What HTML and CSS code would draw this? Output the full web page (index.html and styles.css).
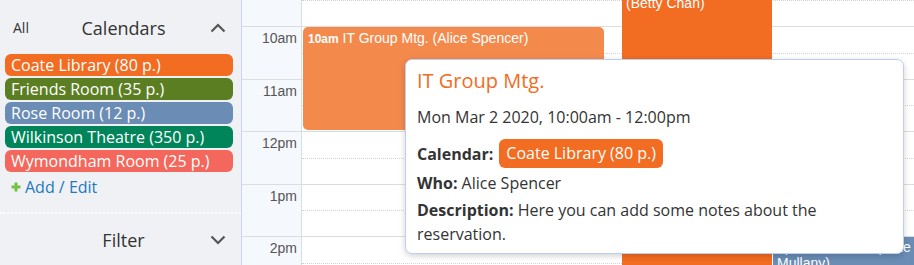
FILE: index.html
```html
<!DOCTYPE html>
<html lang="en">
<head>
  <meta charset="UTF-8" />
  <meta name="viewport" content="width=device-width, initial-scale=1" />
  <title>Room Reservations</title>
  <link rel="stylesheet" href="styles.css">
</head>
<body>

  <div class="app">
    <aside class="sidebar">
      <div class="side-head">
        <span class="all">All</span>
        <span class="side-title">Calendars</span>
        <svg class="chevron" width="16" height="10" viewBox="0 0 16 10"><polyline points="1.5,8.5 8,2 14.5,8.5" fill="none" stroke="#555" stroke-width="2.2" /></svg>
      </div>

      <div class="cal-list">
        <div class="cal c-coate">Coate Library (80 p.)</div>
        <div class="cal c-friends">Friends Room (35 p.)</div>
        <div class="cal c-rose">Rose Room (12 p.)</div>
        <div class="cal c-wilkinson">Wilkinson Theatre (350 p.)</div>
        <div class="cal c-wymondham">Wymondham Room (25 p.)</div>
      </div>

      <a class="add-edit" href="#">
        <svg class="plus" width="10" height="10" viewBox="0 0 10 10"><path d="M5 0.5v9M0.5 5h9" stroke="#76c043" stroke-width="3" /></svg>
        Add / Edit
      </a>

      <div class="side-head filter">
        <span class="all"></span>
        <span class="side-title">Filter</span>
        <svg class="chevron" width="16" height="10" viewBox="0 0 16 10"><polyline points="1.5,1.5 8,8 14.5,1.5" fill="none" stroke="#555" stroke-width="2.2" /></svg>
      </div>
    </aside>

    <div class="calendar">
      <div class="row half"><div class="time"></div><div class="lane"></div></div>
      <div class="row hour"><div class="time">10am</div><div class="lane"></div></div>
      <div class="row half"><div class="time"></div><div class="lane"></div></div>
      <div class="row hour"><div class="time">11am</div><div class="lane"></div></div>
      <div class="row half"><div class="time"></div><div class="lane"></div></div>
      <div class="row hour"><div class="time">12pm</div><div class="lane"></div></div>
      <div class="row half"><div class="time"></div><div class="lane"></div></div>
      <div class="row hour"><div class="time">1pm</div><div class="lane"></div></div>
      <div class="row half"><div class="time"></div><div class="lane"></div></div>
      <div class="row hour"><div class="time">2pm</div><div class="lane"></div></div>
      <div class="row half"><div class="time"></div><div class="lane"></div></div>

      <!-- events sit on the time grid -->
      <div class="events">
        <div class="event ev-it"><b>10am</b> IT Group Mtg. (Alice Spencer)</div>
        <div class="event ev-betty">9am Tech Support<br>(Betty Chan)</div>
        <div class="event ev-rose">2pm Book Club (Mike<br>Mullany)</div>
      </div>

      <div class="popup">
        <div class="pop-title">IT Group Mtg.</div>
        <div class="pop-date">Mon Mar 2 2020, 10:00am - 12:00pm</div>
        <div class="pop-cal"><b>Calendar:</b> <span class="pop-pill">Coate Library (80 p.)</span></div>
        <div class="pop-line"><b>Who:</b> Alice Spencer</div>
        <div class="pop-line"><b>Description:</b> Here you can add some notes about the reservation.</div>
      </div>
    </div>
  </div>

</body>
</html>
```

FILE: styles.css
```css
html, body {
  margin: 0; padding: 0;
  height: 100%;
  overflow: hidden;
  font-family: 'Open Sans', sans-serif;
  color: #333;
  background: white;
}

.app {
  display: flex;
  height: 265px;
  overflow: hidden;
}

/* Sidebar */
.sidebar {
  width: 241px;
  flex-shrink: 0;
  background: #f0f1f4;
  border-right: 1px solid #c6d6f6;
}

.side-head {
  height: 54px;
  display: flex;
  align-items: center;
  padding: 1px 15px 0 13px;
  box-sizing: border-box;
}

.all {
  width: 20px;
  font-size: 14px;
}

.side-title {
  flex: 1;
  text-align: center;
  font-size: 18px;
  padding-left: 4px;
}

.chevron {
  display: block;
}

.cal-list {
  display: flex;
  flex-direction: column;
  gap: 2px;
  margin: 0 8px 0 5px;
}

.cal {
  height: 22px;
  line-height: 22px;
  padding-left: 6px;
  border-radius: 6px;
  color: white;
  font-size: 16px;
  white-space: nowrap;
}

.c-coate { background: #f26c22; }
.c-friends { background: #5b7e23; }
.c-rose { background: #6a8cb5; }
.c-wilkinson { background: #00855a; }
.c-wymondham { background: #f4675c; }

.add-edit {
  display: flex;
  align-items: center;
  gap: 4px;
  margin: 4px 0 0 11px;
  height: 22px;
  font-size: 16px;
  color: #2179bd;
  text-decoration: none;
}

.plus {
  display: block;
}

.filter {
  margin-top: 14px;
  border-top: 2px dotted #fdfdfd;
  height: 52px;
}

/* Time grid */
.calendar {
  flex: 1;
  position: relative;
  overflow: hidden;
  font-family: 'Liberation Sans', Arial, sans-serif;
}

.row {
  display: flex;
  height: 26.25px;
  box-sizing: border-box;
}

.row.hour {
  border-top: 1px solid #ddd;
}

.row.half .lane {
  border-top: 1px dotted #d2d2d2;
}

.time {
  width: 60px;
  flex-shrink: 0;
  background: #f5f8fc;
  border-right: 1px solid #ddd;
  text-align: right;
  padding: 3px 4px 0 0;
  box-sizing: border-box;
  font-size: 14px;
  line-height: 16px;
  color: #555;
}

.lane {
  flex: 1;
  box-sizing: border-box;
}

.events {
  position: absolute;
  top: 0;
  left: 61px;
  right: 0;
  bottom: 0;
  overflow: hidden;
}

.event {
  position: absolute;
  color: white;
  font-size: 14px;
  line-height: 16px;
  border-radius: 5px;
  box-sizing: border-box;
  white-space: nowrap;
  overflow: hidden;
}

.event b {
  font-size: 12px;
}

.ev-it {
  top: 27px;
  left: 0;
  width: 301px;
  height: 103px;
  background: #f4894c;
  padding: 3px 5px;
}

.ev-betty {
  top: -23px;
  left: 319px;
  width: 150px;
  height: 300px;
  background: #f26c22;
  padding: 2px 4px;
  border-radius: 0;
}

.ev-rose {
  top: 237px;
  left: 470px;
  width: 150px;
  height: 60px;
  background: #6a8cb5;
  padding: 2px 4px;
}

/* Event details popup */
.popup {
  position: absolute;
  top: 59px;
  left: 163px;
  width: 499px;
  box-sizing: border-box;
  background: white;
  border: 1px solid #bccff3;
  border-radius: 7px;
  box-shadow: 0 2px 6px rgba(0, 0, 0, 0.18);
  padding: 7px 20px 7px 11px;
  font-family: 'Open Sans', sans-serif;
  font-size: 16px;
  color: #333;
}

.pop-title {
  font-size: 20px;
  line-height: 28px;
  color: #f26c22;
}

.pop-date {
  margin-top: 10px;
  line-height: 24px;
}

.pop-cal {
  margin-top: 10px;
  height: 29px;
  display: flex;
  align-items: center;
  gap: 6px;
}

.pop-pill {
  background: #f26c22;
  color: white;
  height: 29px;
  line-height: 29px;
  padding: 0 7px;
  border-radius: 6px;
}

.pop-line {
  margin-top: 3px;
  line-height: 24px;
}
```
